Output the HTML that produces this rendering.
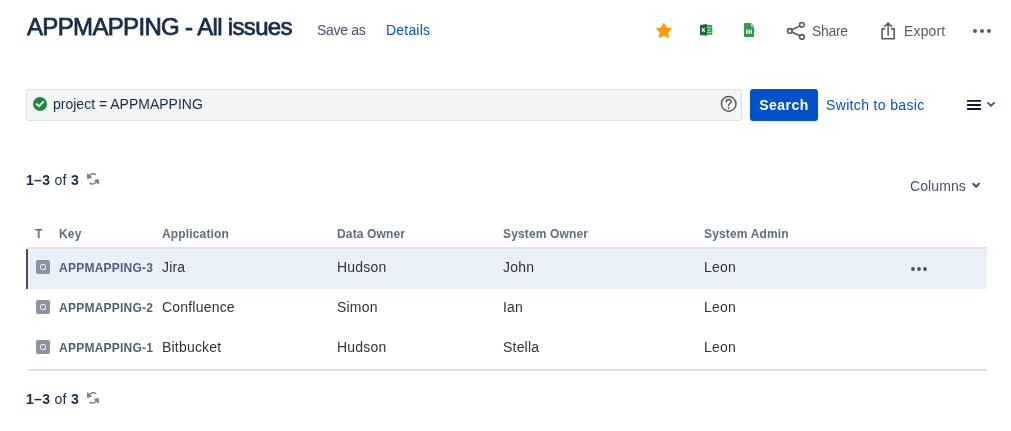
<!DOCTYPE html>
<html><head><meta charset="utf-8">
<style>
*{box-sizing:border-box;margin:0;padding:0}
html,body{width:1011px;height:431px;overflow:hidden;background:#fff}
body{font-family:"Liberation Sans",sans-serif;color:#172B4D;position:relative}
.a{position:absolute;white-space:nowrap;will-change:transform}
svg.a{overflow:visible}
.title{left:27px;top:12px;font-size:24px;line-height:30px;color:#172B4D;letter-spacing:-0.66px;-webkit-text-stroke:0.75px #172B4D}
.t14{font-size:14px;line-height:20px;letter-spacing:0.2px}
.gray{color:#42526E}
.blue{color:#0052CC}
.tool{color:#5A5A5A}
.search{left:26px;top:89px;width:716px;height:32px;background:#F4F5F7;border:1px solid #DFE1E6;border-radius:3px}
.btn{left:750px;top:89px;width:68px;height:32px;background:#0052CC;border-radius:3px;color:#fff;font-weight:bold;font-size:14px;line-height:32px;text-align:center;letter-spacing:0.5px}
.th{font-size:12px;font-weight:bold;color:#5E6C84;line-height:16px;top:226px;letter-spacing:0.15px}
.hline{left:28px;top:247px;width:959px;height:2px;background:#DFE1E6}
.row{left:28px;width:959px;height:40px}
.sel{background:#EAF0F8}
.bar{left:26px;top:249px;width:2px;height:40px;background:#4D4D4D}
.ico{width:14px;height:14px;background:#8993A4;border-radius:2px}
.ico:after{content:"";box-sizing:border-box;position:absolute;left:3.7px;top:3.7px;width:6.6px;height:6.6px;border:1.7px solid #fff;border-radius:2.2px}
.key{font-size:12px;font-weight:bold;color:#505F79;line-height:16px;letter-spacing:0.24px}
.cell{font-size:14px;line-height:20px;color:#333;letter-spacing:0.2px}
</style></head><body>
<div class="a title">APPMAPPING - All issues</div>
<div class="a t14 gray" style="left:317px;top:20px;letter-spacing:-0.3px">Save as</div>
<div class="a t14 blue" style="left:386px;top:20px">Details</div>

<!-- star -->
<svg class="a" style="left:650px;top:18px" width="30" height="24" viewBox="650 18 30 24">
<polygon points="663.9,23.6 666.2,27.8 671,28.8 667.6,32.4 668.3,37.2 663.9,35.2 659.5,37.2 660.2,32.4 656.8,28.8 661.6,27.8" fill="#FF9C00" stroke="#FF9C00" stroke-width="1.3" stroke-linejoin="round"/>
</svg>
<!-- excel -->
<svg class="a" style="left:695px;top:20px" width="25" height="20" viewBox="695 20 25 20">
<rect x="706" y="25" width="6.3" height="9.8" fill="#33A352"/>
<path d="M700,25 L707,24 L707,35.8 L700,35 Z" fill="#1A6B38"/>
<path d="M701.9,28 L704.8,31.8 M704.8,28 L701.9,31.8" stroke="#fff" stroke-width="1.1"/>
<path d="M707.2,27.4 h1.1 M709.2,27.4 h1.9 M707.2,32.6 h1.1 M709.2,32.6 h1.9" stroke="#fff" stroke-width="0.9"/>
<rect x="707.2" y="29.3" width="3.9" height="1.5" fill="#8fd3a0"/>
</svg>
<!-- sheets -->
<svg class="a" style="left:738px;top:18px" width="24" height="24" viewBox="738 18 24 24">
<path d="M744.5,22.9 L751,22.9 L754.1,27 L754.1,36.3 Q754.1,36.9 753.5,36.9 L744.5,36.9 Q743.9,36.9 743.9,36.3 L743.9,23.5 Q743.9,22.9 744.5,22.9 Z" fill="#359A47"/>
<path d="M751.2,23.4 L751.3,26.3 L753.7,26.9" fill="none" stroke="#cfe8d4" stroke-width="0.9" stroke-linejoin="round"/>
<rect x="746.2" y="29.6" width="5.8" height="4.4" fill="#fff"/>
<rect x="747.3" y="29.6" width="1.2" height="1.7" fill="#359A47"/>
<rect x="749.7" y="29.6" width="1.2" height="1.7" fill="#359A47"/>
<rect x="747.3" y="32.3" width="1.2" height="1.7" fill="#359A47"/>
<rect x="749.7" y="32.3" width="1.2" height="1.7" fill="#359A47"/>
</svg>
<!-- share -->
<svg class="a" style="left:782px;top:18px" width="30" height="26" viewBox="782 18 30 26">
<g fill="none" stroke="#5A5A5A" stroke-width="1.6">
<circle cx="789.8" cy="30.9" r="2.3"/>
<circle cx="801.9" cy="24.8" r="2.3"/>
<circle cx="801.9" cy="36.9" r="2.3"/>
<path d="M791.9,29.8 L799.8,25.9 M791.9,32 L799.8,35.8"/>
</g></svg>
<div class="a t14 tool" style="left:812px;top:21px;letter-spacing:-0.3px">Share</div>
<!-- export -->
<svg class="a" style="left:874px;top:16px" width="30" height="30" viewBox="874 16 30 30">
<g fill="none" stroke="#5A5A5A" stroke-width="1.6" stroke-linecap="round" stroke-linejoin="round">
<path d="M884.6,28.9 L882.1,28.9 L882.1,38.8 L894.2,38.8 L894.2,28.9 L891.6,28.9"/>
<path d="M888.1,23.2 L888.1,35.2 M884.8,26.4 L888.1,23.1 L891.4,26.4"/>
</g></svg>
<div class="a t14 tool" style="left:903.5px;top:21px;letter-spacing:0.15px">Export</div>
<!-- more -->
<svg class="a" style="left:968px;top:25px" width="26" height="12" viewBox="968 25 26 12">
<g fill="#5A5A5A"><circle cx="975" cy="31" r="2"/><circle cx="982" cy="31" r="2"/><circle cx="989" cy="31" r="2"/></g>
</svg>

<div class="a search"></div>
<svg class="a" style="left:30px;top:94px" width="20" height="20" viewBox="30 94 20 20">
<circle cx="40" cy="104" r="7" fill="#1B8A3C"/>
<path d="M36.7,104.1 L38.9,106.2 L43.3,102" fill="none" stroke="#fff" stroke-width="1.8" stroke-linecap="round" stroke-linejoin="round"/>
</svg>
<div class="a t14" style="left:53px;top:94px;letter-spacing:0">project = APPMAPPING</div>
<svg class="a" style="left:712px;top:90px" width="36" height="30" viewBox="712 90 36 30">
<circle cx="728.7" cy="103.9" r="7.3" fill="none" stroke="#5A5A5A" stroke-width="1.5"/>
<path d="M726.2,101.9 Q726.3,99.4 728.8,99.4 Q731.3,99.5 731.2,101.7 Q731.1,103 729.5,103.8 Q728.7,104.3 728.7,105.6" fill="none" stroke="#5A5A5A" stroke-width="1.5" stroke-linecap="round"/>
<circle cx="728.7" cy="108" r="0.95" fill="#5A5A5A"/>
</svg>
<div class="a btn">Search</div>
<div class="a t14 blue" style="left:826px;top:95px;letter-spacing:0.35px">Switch to basic</div>
<svg class="a" style="left:958px;top:92px" width="44" height="26" viewBox="958 92 44 26">
<g stroke="#0A1433" stroke-width="1.9" stroke-linecap="round"><path d="M967.8,100.9 H980.2 M967.8,105 H980.2 M967.8,109 H980.2"/></g>
<path d="M988,102.9 L991,105.9 L994,102.9" fill="none" stroke="#4A5A78" stroke-width="2" stroke-linecap="round" stroke-linejoin="round"/>
</svg>

<div class="a t14" style="left:26px;top:170px;letter-spacing:0.3px"><b>1–3</b> of <b>3</b></div>
<svg class="a refresh" style="left:82px;top:168px" width="24" height="22" viewBox="82 168 24 22">
<g fill="none" stroke="#6B6B6B" stroke-width="1.1" stroke-linecap="round">
<path d="M95.8,174.6 Q93,172.2 89.2,175.6"/>
<path d="M89.9,183 Q93,185.8 97.3,181.3"/>
</g>
<path d="M87.6,173.9 L87.7,178.4 L91.3,177.3 Z" fill="#8C8C8C" stroke="#6B6B6B" stroke-width="0.9" stroke-linejoin="round"/>
<path d="M94.7,180.6 L98.3,179.6 L98.4,184.0 Z" fill="#8C8C8C" stroke="#6B6B6B" stroke-width="0.9" stroke-linejoin="round"/>
</svg>
<div class="a t14 gray" style="left:910.3px;top:176px;letter-spacing:0.1px">Columns</div>
<svg class="a" style="left:968px;top:178px" width="16" height="14" viewBox="968 178 16 14">
<path d="M973.3,183.8 L976.1,186.8 L978.9,183.8" fill="none" stroke="#42526E" stroke-width="2.1" stroke-linecap="round" stroke-linejoin="round"/>
</svg>

<div class="a th" style="left:35px">T</div>
<div class="a th" style="left:59px">Key</div>
<div class="a th" style="left:162px">Application</div>
<div class="a th" style="left:337px">Data Owner</div>
<div class="a th" style="left:503px">System Owner</div>
<div class="a th" style="left:704px">System Admin</div>
<div class="a hline"></div>

<div class="a row sel" style="top:249px"></div>
<div class="a bar"></div>

<div class="a ico" style="left:36px;top:260px"></div>
<div class="a key" style="left:59px;top:260px">APPMAPPING-3</div>
<div class="a cell" style="left:162px;top:257px">Jira</div>
<div class="a cell" style="left:337px;top:257px">Hudson</div>
<div class="a cell" style="left:503px;top:257px">John</div>
<div class="a cell" style="left:704px;top:257px">Leon</div>
<svg class="a" style="left:905px;top:262px" width="28" height="14" viewBox="905 262 28 14">
<g fill="#42526E"><circle cx="913" cy="269" r="1.9"/><circle cx="919" cy="269" r="1.9"/><circle cx="925" cy="269" r="1.9"/></g>
</svg>

<div class="a ico" style="left:36px;top:300px"></div>
<div class="a key" style="left:59px;top:300px">APPMAPPING-2</div>
<div class="a cell" style="left:162px;top:297px">Confluence</div>
<div class="a cell" style="left:337px;top:297px">Simon</div>
<div class="a cell" style="left:503px;top:297px">Ian</div>
<div class="a cell" style="left:704px;top:297px">Leon</div>

<div class="a ico" style="left:36px;top:340px"></div>
<div class="a key" style="left:59px;top:340px">APPMAPPING-1</div>
<div class="a cell" style="left:162px;top:337px">Bitbucket</div>
<div class="a cell" style="left:337px;top:337px">Hudson</div>
<div class="a cell" style="left:503px;top:337px">Stella</div>
<div class="a cell" style="left:704px;top:337px">Leon</div>

<div class="a" style="left:28px;top:369px;width:959px;height:2px;background:#DFE1E6"></div>
<div class="a t14" style="left:26px;top:389px;letter-spacing:0.3px"><b>1–3</b> of <b>3</b></div>
<svg class="a refresh" style="left:82px;top:387px" width="24" height="22" viewBox="82 168 24 22">
<g fill="none" stroke="#6B6B6B" stroke-width="1.1" stroke-linecap="round">
<path d="M95.8,174.6 Q93,172.2 89.2,175.6"/>
<path d="M89.9,183 Q93,185.8 97.3,181.3"/>
</g>
<path d="M87.6,173.9 L87.7,178.4 L91.3,177.3 Z" fill="#8C8C8C" stroke="#6B6B6B" stroke-width="0.9" stroke-linejoin="round"/>
<path d="M94.7,180.6 L98.3,179.6 L98.4,184.0 Z" fill="#8C8C8C" stroke="#6B6B6B" stroke-width="0.9" stroke-linejoin="round"/>
</svg>
</body></html>
